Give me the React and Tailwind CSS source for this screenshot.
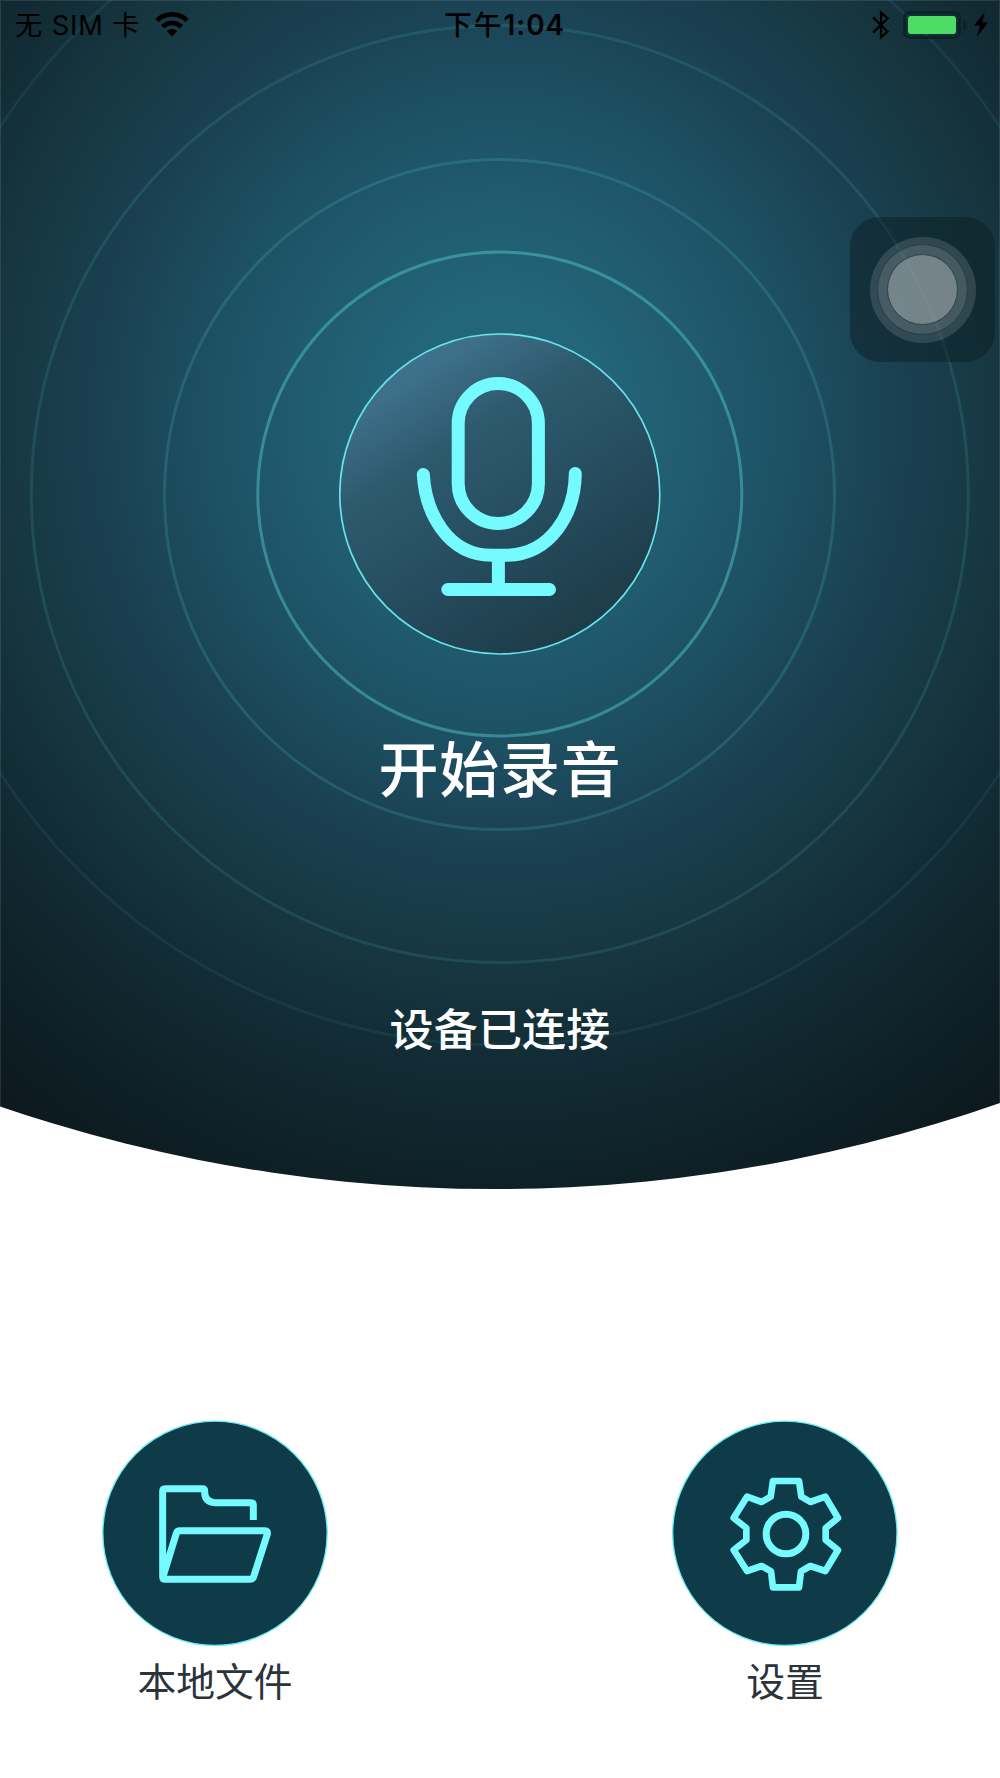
import React from "react";

const CYAN = "#75faff";

function Rings() {
  return (
    <svg className="absolute inset-0 h-full w-full" viewBox="0 0 1000 1189" fill="none" stroke="#5fdfe2" strokeWidth="3">
      <circle cx="499.8" cy="494" r="242" stroke="#5ad2d8" strokeOpacity="0.43" />
      <circle cx="499.5" cy="494.6" r="335" strokeOpacity="0.16" />
      <circle cx="499.8" cy="494" r="468.5" strokeOpacity="0.12" />
      <circle cx="500" cy="450" r="595" strokeOpacity="0.08" />
    </svg>
  );
}

function WifiIcon() {
  return (
    <svg className="ml-[15px] h-[25px] w-[34px]" viewBox="0 0 34 25" fill="none" stroke="#000" strokeWidth="4.6">
      <path d="M1.8 8.4 C10.5 0.3 23.5 0.3 32.2 8.4" />
      <path d="M7.6 14.7 C13 9.7 21 9.7 26.4 14.7" />
      <path d="M17 24.5 L11.9 19.2 C14.8 16.4 19.2 16.4 22.1 19.2 Z" fill="#000" stroke="none" />
    </svg>
  );
}

function BluetoothIcon() {
  return (
    <svg className="-ml-px h-[30px] w-[18px]" viewBox="0 0 18 30" fill="none" stroke="#000" strokeWidth="2.2">
      <path d="M1.2 7.4 L15.6 21.6 L9 27.4 V2.6 L15.6 8.4 L1.2 22.6" />
    </svg>
  );
}

function BatteryIcon() {
  return (
    <div className="ml-[13px] flex items-center">
      <div className="h-[28px] w-[58px] rounded-[7px] border-[3px] border-[#0d2229] p-[2px]">
        <div className="h-full w-full rounded-[3px] bg-[#4fdc64]" />
      </div>
      <div className="ml-[2px] h-[10px] w-[4px] rounded-r-full bg-[#0d2229]" />
    </div>
  );
}

function BoltIcon() {
  return (
    <svg className="ml-[7px] h-[25px] w-[14px]" viewBox="0 0 14 25" fill="#000">
      <path d="M10.8 0 L0 13.4 H5.8 L3 25 L14 10.4 H8.2 Z" />
    </svg>
  );
}

function StatusBar() {
  return (
    <div className="relative grid h-[50px] grid-cols-[1fr_auto_1fr] items-center text-[27.2px] leading-none text-black">
      <div className="flex items-center pl-[15px]">
        <span className="whitespace-pre pt-px tracking-[0.9px]">无 SIM 卡</span>
        <WifiIcon />
      </div>
      <div className="flex items-center pl-[9px] pt-[2px] text-[27.8px] font-medium">
        <span className="tracking-[2px]">下午</span>
        <span className="font-semibold tracking-[1px]">1:04</span>
      </div>
      <div className="flex items-center justify-end pb-px pr-[12px]">
        <BluetoothIcon />
        <BatteryIcon />
        <BoltIcon />
      </div>
    </div>
  );
}

function MicButton() {
  return (
    <button className="relative mt-[283px] h-[322px] w-[322px] rounded-full bg-[linear-gradient(148deg,#427896_0%,#3d6f89_18%,#2e5a6e_34%,#264e60_56%,#1f3f4d_80%,#1b3845_100%)]">
      <svg className="h-full w-full" viewBox="339 333 322 322" fill="none" stroke={CYAN} strokeWidth="13" strokeLinecap="round">
        <circle cx="499.8" cy="494" r="160" stroke="#66e3ea" strokeWidth="1.7" />
        <rect x="458.2" y="383.5" width="80.2" height="140" rx="40.1" />
        <path d="M423.3 474.5 C425.5 512 447 555.3 492 555.3 H505 C551 555.3 575 513 575.3 473.5" />
        <path d="M498.4 556 V588" strokeLinecap="butt" />
        <path d="M447.8 589.5 H549.5" />
      </svg>
    </button>
  );
}

function AssistiveTouch() {
  return (
    <div className="absolute left-[850px] top-[217px] flex h-[145px] w-[145px] items-center justify-center rounded-[30px] bg-[#0c1a1e]/45">
      <div className="flex h-[106px] w-[106px] items-center justify-center rounded-full bg-white/13">
        <div className="flex h-[91px] w-[91px] items-center justify-center rounded-full border border-[#243f48] bg-white/10">
          <div className="h-[71px] w-[71px] rounded-full border border-[#2c444c] bg-[#acb7ba]/45" />
        </div>
      </div>
    </div>
  );
}

function FolderIcon() {
  return (
    <svg className="h-full w-full" viewBox="36 60 678 678" fill="none" stroke={CYAN} strokeWidth="21">
      <circle cx="375" cy="400" r="336.5" fill="#0f3a48" stroke="#66eef3" strokeWidth="4" />
      <path d="M490 360 V316 Q490 308 482 308 H375 Q344 306 344 276 V273 Q344 266 337 266 H226 Q218 266 218 274 V530 Q218 538 226 538 H481 Q488 538 491 530 L532 402 Q534 392 525 392 H270 Q261 392 259 400 L219 530" />
    </svg>
  );
}

function GearIcon() {
  return (
    <svg className="h-full w-full" viewBox="65 60 678 678" fill="none" stroke={CYAN} strokeWidth="20" strokeLinejoin="round">
      <circle cx="403.5" cy="400" r="336.5" fill="#0f3a48" stroke="#66eef3" strokeWidth="4" />
      <circle cx="407" cy="402" r="59.5" strokeWidth="21" />
      <path d="M368 243 L361 290 L334 306 L290 290 L250 354 L288 384 V420 L250 450 L290 513 L334 498 L362 514 L368 562 H446 L452 514 L480 498 L525 513 L563 450 L526 420 V384 L563 354 L525 290 L480 306 L453 290 L446 243 Z" />
    </svg>
  );
}

function ActionButton({ label, children }) {
  return (
    <button className="flex w-[226px] flex-col items-center">
      <span className="block h-[226px] w-[226px]">{children}</span>
      <span className="mt-[17px] text-[38.8px] leading-[38px] text-[#2b333b]">{label}</span>
    </button>
  );
}

export default function App() {
  return (
    <main className="relative h-[1778px] w-[1000px] overflow-hidden bg-white font-[Inter,'Noto_Sans_CJK_SC',sans-serif]">
      <section className="relative flex h-[1189px] flex-col bg-[radial-gradient(ellipse_920px_1000px_at_500px_420px,#24687d_0%,#236579_12%,#205a6d_23%,#1d5063_32%,#1a4152_43%,#163741_54.5%,#122b34_65%,#0e2127_76.5%,#0c191e_87%)] [clip-path:circle(1525px_at_495px_-336px)]">
        <Rings />
        <div className="absolute inset-0 border-x border-t border-white/10" />
        <StatusBar />
        <div className="flex flex-col items-center text-white">
          <MicButton />
          <h1 className="mt-[85px] text-[60px] font-medium leading-[60px] tracking-[0.8px]">开始录音</h1>
          <p className="mt-[208px] text-[44px] font-medium leading-[44px] tracking-[0.2px]">设备已连接</p>
        </div>
        <AssistiveTouch />
      </section>
      <nav className="mt-[231px] flex justify-between px-[102px]">
        <ActionButton label="本地文件"><FolderIcon /></ActionButton>
        <ActionButton label="设置"><GearIcon /></ActionButton>
      </nav>
    </main>
  );
}
